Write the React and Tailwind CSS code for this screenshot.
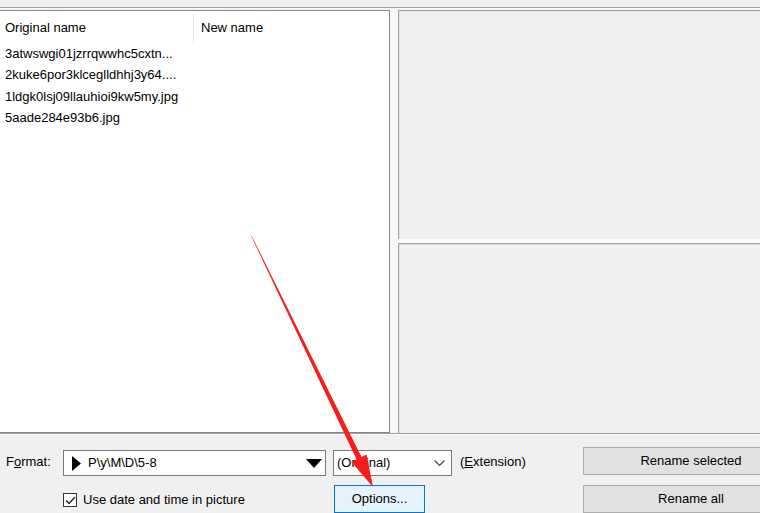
export default function App() {
  const files = [
    "3atwswgi01jzrrqwwhc5cxtn...",
    "2kuke6por3klceglldhhj3y64....",
    "1ldgk0lsj09llauhioi9kw5my.jpg",
    "5aade284e93b6.jpg",
  ];

  return (
    <div className="relative h-[513px] w-[760px] overflow-hidden bg-[#f0f0f0] font-['Liberation_Sans',Arial,sans-serif] text-[13px] text-black">
      {/* top edge */}
      <div className="h-[7px]" />
      <div className="h-[3px] border-t border-[#a0a0a0] bg-[#f7f7f7]" />

      {/* main panes */}
      <div className="flex h-[423px]">
        <div className="flex w-[390px] shrink-0 flex-col border-y border-r border-[#828790] bg-white">
          <div className="flex h-[32px] shrink-0">
            <div className="flex w-[193px] items-center pl-[5px] pt-[2px]">Original name</div>
            <div className="mt-[3px] w-px bg-[#e5e5e5]" />
            <div className="flex items-center pl-[7px] pt-[2px]">New name</div>
          </div>
          {files.map((f) => (
            <div key={f} className="flex h-[21.4px] items-center whitespace-nowrap pl-[5px]">
              {f}
            </div>
          ))}
        </div>

        <div className="w-[8px] shrink-0 bg-[#f7f7f7]" />

        <div className="flex flex-1 flex-col">
          <div className="h-[229px] shadow-[inset_1px_1px_0_#a0a0a0,inset_2px_2px_0_#e3e3e3]" />
          <div className="h-[4px] bg-[#fafafa]" />
          <div className="flex-1 shadow-[inset_1px_1px_0_#a0a0a0,inset_2px_2px_0_#e3e3e3]" />
        </div>
      </div>

      <div className="h-[2px] border-t border-[#a0a0a0] bg-white" />

      {/* bottom controls */}
      <div className="flex h-[40px] items-start pt-[12px]">
        <label className="mt-[7px] w-[63px] shrink-0 pl-[6px] leading-[16px]">
          F<span className="underline">o</span>rmat:
        </label>
        <div className="mt-[3px] flex h-[26px] w-[263px] shrink-0 items-center border border-[#7a7a7a] bg-white">
          <svg width="9" height="15" viewBox="0 0 9 15" className="ml-[8px]">
            <polygon points="0,0 9,7.5 0,15" fill="#000" />
          </svg>
          <span className="ml-[7px]">P\y\M\D\5-8</span>
          <svg width="16" height="9" viewBox="0 0 16 9" className="ml-auto mr-[3px]">
            <polygon points="0,0 16,0 8,9" fill="#000" />
          </svg>
        </div>
        <div className="ml-[7px] mt-[3px] flex h-[26px] w-[119px] shrink-0 items-center border border-[#7a7a7a] bg-white">
          <span className="pl-[3px]">(Original)</span>
          <svg width="11" height="7" viewBox="0 0 11 7" className="ml-auto mr-[6px]">
            <polyline points="0.5,0.5 5.5,5.5 10.5,0.5" fill="none" stroke="#444" strokeWidth="1.2" />
          </svg>
        </div>
        <label className="ml-[8px] mt-[7px] w-[123px] shrink-0 leading-[16px]">
          (<span className="underline">E</span>xtension)
        </label>
        <button className="flex h-[28px] w-[216px] shrink-0 items-center justify-center border border-[#adadad] bg-[#e1e1e1]">
          Rename selected
        </button>
      </div>

      <div className="flex items-start pt-[10px]">
        <div className="flex w-[334px] shrink-0 items-center pl-[63px] pt-[7px]">
          <div className="flex h-[14px] w-[14px] shrink-0 items-center justify-center border border-[#333] bg-white">
            <svg width="11" height="9" viewBox="0 0 11 9">
              <polyline points="1,4.5 4,7.5 10,1" fill="none" stroke="#222" strokeWidth="1.3" />
            </svg>
          </div>
          <span className="ml-[6px] whitespace-nowrap leading-[16px]">Use date and time in picture</span>
        </div>
        <button className="flex h-[28px] w-[91px] shrink-0 items-center justify-center border border-[#0078d7] bg-[#e5f1fb]">
          Options...
        </button>
        <button className="ml-[158px] flex h-[28px] w-[216px] shrink-0 items-center justify-center border border-[#adadad] bg-[#e1e1e1]">
          Rename all
        </button>
      </div>

      {/* red annotation arrow */}
      <svg className="pointer-events-none absolute left-0 top-0" width="760" height="513" viewBox="0 0 760 513">
        <polygon
          points="251.7,235.9 361.5,457 366.6,454.6 373,487 351.4,461.9 356.6,459.5 251.2,236.1"
          fill="#f91c1c"
        />
      </svg>
    </div>
  );
}
